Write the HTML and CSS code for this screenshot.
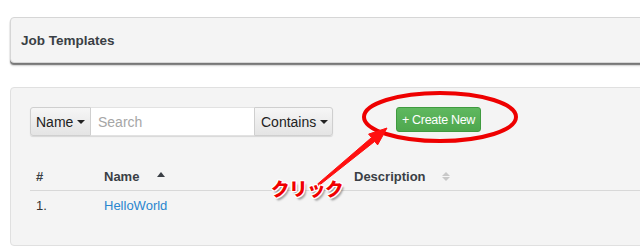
FILE: index.html
```html
<!DOCTYPE html>
<html>
<head>
<meta charset="utf-8">
<link rel="stylesheet" href="styles.css">
</head>
<body>
<div class="page">
  <div class="panel head-panel">
    <h1 class="title">Job Templates</h1>
  </div>
  <div class="panel main-panel">
    <div class="toolbar">
      <div class="filter">
        <button class="btn btn-left">Name <span class="caret"></span></button>
        <input class="search" type="text" placeholder="Search">
        <button class="btn btn-right">Contains <span class="caret"></span></button>
      </div>
      <button class="btn-create">+ Create New</button>
    </div>
    <table class="grid">
      <thead>
        <tr>
          <th class="c-num">#</th>
          <th class="c-name">Name <span class="sort-up"></span></th>
          <th class="c-desc">Description <span class="sort-both"><span class="su"></span><span class="sd"></span></span></th>
        </tr>
      </thead>
      <tbody>
        <tr>
          <td class="c-num">1.</td>
          <td class="c-name"><a class="link" href="#">HelloWorld</a></td>
          <td class="c-desc"></td>
        </tr>
      </tbody>
    </table>
  </div>
  <svg class="annot" width="640" height="250" viewBox="0 0 640 250">
    <ellipse cx="440" cy="117" rx="76" ry="24" fill="none" stroke="#ee0000" stroke-width="4"/>
    <polygon points="317.4,184.2 371.5,137.6 368.6,134.1 387,128 377.6,144.9 374.7,141.4 318.6,185.8" fill="#ff1010" stroke="#ff1010" stroke-width="1" stroke-linejoin="round"/>
  </svg>
  <div class="click-label">クリック</div>
</div>
</body>
</html>
```
FILE: styles.css
```css
html, body {
  margin: 0;
  padding: 0;
  background: #ffffff;
  overflow: hidden;
}
body {
  font-family: "Liberation Sans", Arial, sans-serif;
  color: #333;
}
.page {
  position: relative;
  width: 640px;
  height: 250px;
  padding: 17px 0 0 10px;
  box-sizing: border-box;
}
.panel {
  width: 660px;
  background: #f4f4f4;
  border: 1px solid #d6d6d6;
  border-radius: 4px;
  box-sizing: border-box;
}
.head-panel {
  height: 46px;
  display: flex;
  align-items: center;
  padding-left: 10px;
  box-shadow: 0 2px 1px rgba(0,0,0,0.45), 0 3px 2px rgba(0,0,0,0.15);
}
.title {
  margin: 0;
  font-size: 13.5px;
  font-weight: bold;
  color: #3a3f45;
}
.main-panel {
  margin-top: 24px;
  height: 159px;
  border-color: #e0e0e0;
  padding: 19px 0 0 19px;
}
.toolbar {
  display: flex;
  align-items: flex-start;
}
.filter {
  display: flex;
  height: 29px;
  box-shadow: 0 1px 1px rgba(0,0,0,0.12);
  border-radius: 3px;
}
.btn {
  font-family: "Liberation Sans", Arial, sans-serif;
  font-size: 14px;
  color: #222;
  background: linear-gradient(#f6f6f6, #e4e4e4);
  border: 1px solid #cfcfcf;
  padding: 0 5px;
  height: 29px;
  display: flex;
  align-items: center;
  gap: 4px;
}
.btn-left {
  width: 61px;
  border-radius: 3px 0 0 3px;
  padding-left: 5px;
}
.btn-right {
  width: 79px;
  border-radius: 0 3px 3px 0;
  padding-left: 6px;
}
.caret {
  display: inline-block;
  width: 0;
  height: 0;
  border-left: 4px solid transparent;
  border-right: 4px solid transparent;
  border-top: 4px solid #222;
  margin-top: 1px;
}
.search {
  width: 163px;
  height: 29px;
  box-sizing: border-box;
  border: 1px solid #e2e2e2;
  border-left: none;
  border-right: none;
  padding: 0 7px;
  font-family: "Liberation Sans", Arial, sans-serif;
  font-size: 14px;
  background: #fff;
  outline: none;
}
.search::placeholder {
  color: #a6a6a6;
}
.btn-create {
  margin-left: 63px;
  width: 85px;
  height: 25px;
  border: 1px solid #3f9a3f;
  border-radius: 3px;
  background: linear-gradient(#5fb85f, #4ea74e);
  color: #fff;
  font-family: "Liberation Sans", Arial, sans-serif;
  font-size: 12.5px;
  padding: 0;
  letter-spacing: -0.3px;
}
.grid {
  margin-top: 28px;
  border-collapse: collapse;
  width: 621px;
}
.grid th {
  text-align: left;
  font-size: 13px;
  font-weight: bold;
  color: #3a3f45;
  height: 24px;
  padding: 0 0 2px 0;
  border-bottom: 1px solid #d8d8d8;
  vertical-align: middle;
}
.grid td {
  font-size: 13px;
  color: #333;
  height: 28px;
  padding: 0;
  vertical-align: middle;
}
.grid .c-num { width: 68px; padding-left: 6px; }
.c-name { width: 250px; }
.sort-up {
  display: inline-block;
  width: 0;
  height: 0;
  border-left: 4px solid transparent;
  border-right: 4px solid transparent;
  border-bottom: 5px solid #3a3f45;
  margin-left: 14px;
  vertical-align: 4px;
}
.sort-both {
  display: inline-flex;
  flex-direction: column;
  gap: 1px;
  margin-left: 13px;
  vertical-align: middle;
  position: relative;
  top: -1px;
}
.su, .sd {
  width: 0;
  height: 0;
  border-left: 4px solid transparent;
  border-right: 4px solid transparent;
}
.su { border-bottom: 4px solid #c8c8c8; }
.sd { border-top: 4px solid #c8c8c8; }
.link {
  color: #2a86cf;
  text-decoration: none;
}
.annot {
  position: absolute;
  left: 0;
  top: 0;
  pointer-events: none;
}
.click-label {
  position: absolute;
  left: 271px;
  top: 176px;
  font-family: "Noto Sans CJK JP", sans-serif;
  font-weight: 900;
  font-size: 18.5px;
  line-height: 24px;
  color: #f00000;
  letter-spacing: -0.5px;
  text-shadow:
    -1px -1px 0 #fff, 1px -1px 0 #fff, -1px 1px 0 #fff, 1px 1px 0 #fff,
    0 -1px 0 #fff, 0 1px 0 #fff, -1px 0 0 #fff, 1px 0 0 #fff,
    2px 3px 2px rgba(0,0,0,0.35);
}
```
